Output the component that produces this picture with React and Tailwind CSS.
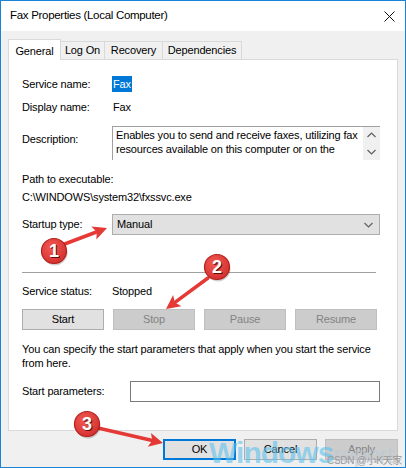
import React from 'react';

const font = { fontFamily: '"Liberation Sans", Arial, sans-serif' };

function Row({ label, labelW = 'w-[90px]', children, className = '' }) {
  return (
    <div className={`flex items-center ${className}`}>
      <div className={`${labelW} shrink-0`}>{label}</div>
      {children}
    </div>
  );
}

function Btn({ children, disabled, primary, className = '' }) {
  const look = disabled
    ? 'bg-[#cccccc] border-[#bfbfbf] text-[#838383]'
    : primary
      ? 'bg-[#e1e1e1] border-[#0078d7] border-2 text-black'
      : 'bg-[#e1e1e1] border-[#adadad] text-black';
  return (
    <div className={`flex h-[21px] items-center justify-center border ${look} ${className}`}>{children}</div>
  );
}

function Chevron({ up }) {
  return (
    <svg width="9" height="6" viewBox="0 0 9 6" className="block">
      <path d={up ? 'M0.5 5 L4.5 1 L8.5 5' : 'M0.5 1 L4.5 5 L8.5 1'} fill="none" stroke="#606060" strokeWidth="1.2" />
    </svg>
  );
}

function Marker({ cx, cy, n }) {
  return (
    <g>
      <circle cx={cx + 1} cy={cy + 2} r="12.5" fill="#000" opacity="0.18" />
      <circle cx={cx} cy={cy} r="12.5" fill="url(#redg)" stroke="#b3201c" strokeWidth="1.2" />
      <text x={cx + 1} y={cy + 7} textAnchor="middle" fontSize="18" fontWeight="bold" fill="#5a0d0b" fontFamily="Liberation Sans, Arial, sans-serif">{n}</text>
      <text x={cx} y={cy + 6} textAnchor="middle" fontSize="18" fontWeight="bold" fill="#fff" fontFamily="Liberation Sans, Arial, sans-serif">{n}</text>
    </g>
  );
}

function Arrow({ x1, y1, x2, y2 }) {
  const dx = x2 - x1;
  const dy = y2 - y1;
  const len = Math.hypot(dx, dy);
  const ux = dx / len;
  const uy = dy / len;
  const hl = 14;
  const hw = 7;
  const bx = x2 - ux * hl;
  const by = y2 - uy * hl;
  const px = -uy;
  const py = ux;
  return (
    <g>
      <line x1={x1} y1={y1} x2={bx + ux * 2} y2={by + uy * 2} stroke="#e53935" strokeWidth="3.5" strokeLinecap="round" />
      <polygon points={`${x2},${y2} ${bx + px * hw},${by + py * hw} ${bx + ux * 3},${by + uy * 3} ${bx - px * hw},${by - py * hw}`} fill="#e53935" />
    </g>
  );
}

export default function App() {
  return (
    <div className="relative h-[468px] w-[406px] overflow-hidden border border-[#1883d7] bg-[#f0f0f0] text-[11px] tracking-[-0.15px] text-black" style={font}>
      {/* title bar */}
      <div className="flex h-[30px] items-center justify-between bg-white pl-[9px] pr-[10px]">
        <span className="text-[11.5px] tracking-[-0.3px]">Fax Properties (Local Computer)</span>
        <svg width="11" height="11" viewBox="0 0 11 11">
          <path d="M0.5 0.5 L10.5 10.5 M10.5 0.5 L0.5 10.5" stroke="#111" strokeWidth="1" />
        </svg>
      </div>

      {/* tabs */}
      <div className="mt-[7px] flex h-[21px] items-end pl-[7px]">
        <div className="relative z-10 -mb-px flex h-[21px] w-[53px] items-start justify-center border border-b-0 border-[#d9d9d9] bg-white pt-[3px]">General</div>
        <div className="flex h-[18px] w-[44px] items-center justify-center border border-l-0 border-b-0 border-[#d9d9d9]">Log On</div>
        <div className="flex h-[18px] w-[58px] items-center justify-center border border-l-0 border-b-0 border-[#d9d9d9]">Recovery</div>
        <div className="flex h-[18px] w-[79px] items-center justify-center border border-l-0 border-b-0 border-[#d9d9d9]">Dependencies</div>
      </div>

      {/* panel */}
      <div className="mx-[7px] h-[372px] border border-[#d9d9d9] bg-white pl-[13px] pr-[17px]">
        <Row label="Service name:" className="mt-[16px] h-[16px]">
          <span className="bg-[#0078d7] px-[1px] text-white">Fax</span>
        </Row>
        <Row label="Display name:" className="mt-[7px] h-[16px]">
          <span className="pl-[1px]">Fax</span>
        </Row>
        <div className="mt-[11px] flex h-[34px]">
          <div className="w-[90px] shrink-0 pt-[5px]">Description:</div>
          <div className="flex flex-1 border-l border-t border-[#a0a0a0]">
            <div className="flex-1 pl-[3px] pt-[1px] leading-[14px]">
              Enables you to send and receive faxes, utilizing fax resources available on this computer or on the
            </div>
            <div className="flex w-[17px] flex-col items-center justify-between bg-[#f0f0f0] py-[5px]">
              <Chevron up />
              <Chevron />
            </div>
          </div>
        </div>
        <div className="mt-[11px] h-[16px] leading-[16px]">Path to executable:</div>
        <div className="mt-[2px] h-[16px] leading-[16px]">C:\WINDOWS\system32\fxssvc.exe</div>
        <Row label="Startup type:" className="mt-[9px] h-[21px]">
          <div className="flex h-[21px] flex-1 items-center justify-between border border-[#adadad] bg-[#e1e1e1] pl-[4px] pr-[6px]">
            <span>Manual</span>
            <Chevron />
          </div>
        </Row>
        <div className="mt-[37px] mr-[4px] h-px bg-[#a0a0a0]" />
        <Row label="Service status:" className="mt-[10px] h-[16px]">
          <span>Stopped</span>
        </Row>
        <div className="mt-[10px] flex gap-[9px]">
          <Btn className="w-[82px]">Start</Btn>
          <Btn disabled className="w-[82px]">Stop</Btn>
          <Btn disabled className="w-[82px]">Pause</Btn>
          <Btn disabled className="w-[82px]">Resume</Btn>
        </div>
        <p className="mt-[12px] leading-[14px]">
          You can specify the start parameters that apply when you start the service from here.
        </p>
        <Row label="Start parameters:" labelW="w-[108px]" className="mt-[11px] h-[21px]">
          <div className="h-[21px] flex-1 border border-[#7a7a7a] bg-white" />
        </Row>
      </div>

      {/* dialog buttons */}
      <div className="mt-[8px] flex justify-end gap-[8px] pr-[7px]">
        <Btn primary className="w-[73px]">OK</Btn>
        <Btn className="w-[73px]">Cancel</Btn>
        <Btn disabled className="w-[73px]">Apply</Btn>
      </div>

      {/* watermark */}
      <div className="pointer-events-none absolute left-[208px] top-[437px] flex items-baseline leading-none" style={{ fontFamily: '"Liberation Sans", Arial, sans-serif' }}>
        <span className="text-[30px] font-bold tracking-[-1px] text-[#5cc2ee]/60">Windows</span>
        <span className="text-[24px] tracking-[-0.5px] text-[#b9c9d3]/60">report</span>
      </div>
      <div className="pointer-events-none absolute left-[326px] top-[452px] text-[10px] tracking-[-0.3px] text-[#9a9a9a]" style={{ fontFamily: '"Liberation Sans", "Noto Sans CJK SC", sans-serif' }}>
        CSDN @小K天家佑
      </div>

      {/* annotations */}
      <svg className="pointer-events-none absolute left-[-1px] top-[-1px]" width="406" height="468" viewBox="0 0 406 468">
        <defs>
          <radialGradient id="redg" cx="0.4" cy="0.35" r="0.7">
            <stop offset="0" stopColor="#f25a52" />
            <stop offset="1" stopColor="#d32f2f" />
          </radialGradient>
        </defs>
        <Arrow x1={62} y1={245} x2={107} y2={228} />
        <Arrow x1={208} y1={278} x2={166} y2={309} />
        <Arrow x1={98} y1={428} x2={163} y2={443} />
        <Marker cx={54} cy={251} n="1" />
        <Marker cx={217} cy={267} n="2" />
        <Marker cx={87} cy={424} n="3" />
      </svg>
    </div>
  );
}
